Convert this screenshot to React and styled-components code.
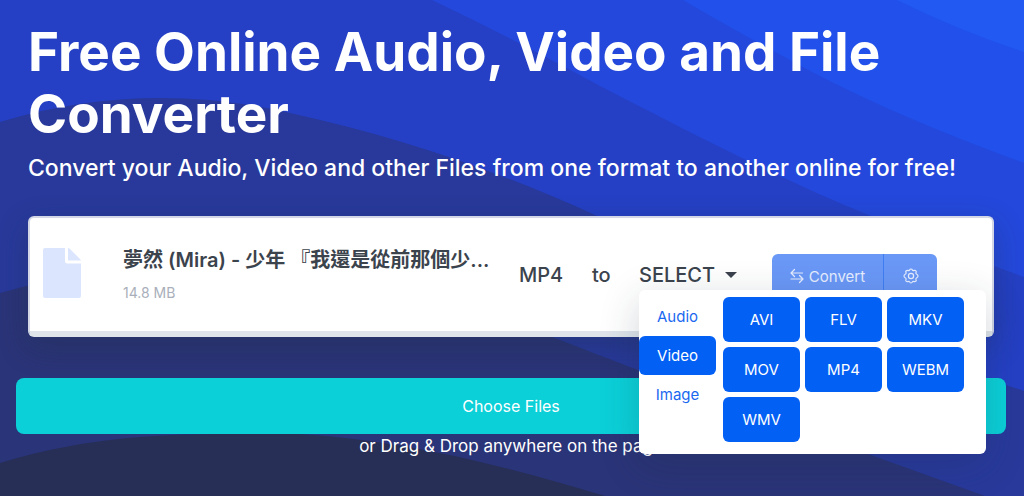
import React, { useState } from "react";
import styled, { createGlobalStyle } from "styled-components";

const formats = {
    Audio: ["AAC", "FLAC", "M4A", "MP3", "OGG", "WAV", "WMA"],
    Video: ["AVI", "FLV", "MKV", "MOV", "MP4", "WEBM", "WMV"],
    Image: ["BMP", "GIF", "JPG", "PNG", "TIFF", "WEBP"],
};

const Waves = () => (
    <WavesSvg viewBox="0 0 1024 496" preserveAspectRatio="none" aria-hidden="true">
        <rect width="1024" height="496" fill="#2259f3" />
        <path fill="#2150ea" d="M0 0H897Q960 31 1024 52V496H0Z" />
        <path fill="#2448db" d="M0 0H683Q732 29 812 72Q900 118 1024 163V496H0Z" />
        <path fill="#2540c4" d="M0 0H432Q512 38 600 86C700 138 800 188 869 215Q940 247 1024 277V496H0Z" />
        <path fill="#28399b" d="M0 122C100 91 200 92 290 113C390 135 490 167 595 215C740 282 860 337 1024 391V496H0Z" />
        <path fill="#2a3478" d="M0 293C110 262 210 262 310 276C400 289 480 310 552 337C680 386 770 421 868 454L985 496H0Z" />
        <path fill="#272f56" d="M0 463C110 430 200 434 300 434C400 440 500 464 605 496H0Z" />
    </WavesSvg>
);

const FileIcon = () => (
    <svg width="38" height="50" viewBox="0 0 38 50" fill="#dbe6fe" aria-hidden="true">
        <path d="M2 0H22V13Q22 15.500 24.500 15.500H38V48Q38 50 36 50H2Q0 50 0 48V2Q0 0 2 0Z" />
        <path d="M25 0Q26 0 27 1L37 11Q38 12 38 12.500H25Z" />
    </svg>
);

const SwapIcon = () => (
    <svg width="14" height="16" viewBox="0 0 14 16" fill="none" stroke="currentColor" strokeWidth="1.2" strokeLinecap="round" strokeLinejoin="round" aria-hidden="true">
        <path d="M4.500 1.500L1 5L4.500 8.500M1 5H12.500M1 11H13M9.500 7.500L13 11L9.500 14.500" />
    </svg>
);

// Outline with eight rounded teeth
const GearIcon = () => (
    <svg width="16" height="16" viewBox="0 0 16 16" fill="none" stroke="currentColor" strokeWidth="1.2" strokeLinejoin="round" aria-hidden="true">
        <path d="M6.600 2.100Q7 1 8 1T9.400 2.100Q10 3 11.100 2.400Q12.300 2 13 3T12.900 4.600Q12.700 5.800 13.800 6.300Q15 6.900 15 8T13.800 9.700Q12.700 10.200 12.900 11.400Q13.700 12.300 13 13T11.100 13.600Q10 13 9.400 13.900Q9 15 8 15T6.600 13.900Q6 13 4.900 13.600Q3.700 14 3 13T3.100 11.400Q3.300 10.200 2.200 9.700Q1 9.100 1 8T2.200 6.300Q3.300 5.800 3.100 4.600Q2.300 3.700 3 3T4.900 2.400Q6 3 6.600 2.100Z" />
        <circle cx="8" cy="8" r="2.600" />
    </svg>
);

const FormatMenu = () => {
    const [tab, setTab] = useState("Video");
    return (
        <Menu>
            <Tabs>
                {Object.keys(formats).map((name) => (
                    <Tab key={name} $active={name === tab} onClick={() => setTab(name)}>
                        {name}
                    </Tab>
                ))}
            </Tabs>
            <Formats>
                {formats[tab].map((name) => (
                    <Format key={name}>{name}</Format>
                ))}
            </Formats>
        </Menu>
    );
};

const App = () => {
    const [open, setOpen] = useState(true);
    return (
        <>
            <GlobalStyle />
            <Hero>
                <Waves />
                <Intro>
                    <h1>Free Online Audio, Video and File Converter</h1>
                    <p>Convert your Audio, Video and other Files from one format to another online for free!</p>
                </Intro>
                <FileCard>
                    <FileIcon />
                    <FileInfo>
                        <FileName>夢然 (Mira) - 少年 『我還是從前那個少...</FileName>
                        <FileSize>14.8 MB</FileSize>
                    </FileInfo>
                    <Source>MP4</Source>
                    <To>to</To>
                    <Target>
                        <Select aria-haspopup="true" aria-expanded={open} onClick={() => setOpen(!open)}>
                            SELECT
                            <Caret />
                        </Select>
                        {open && <FormatMenu />}
                    </Target>
                    <Actions>
                        <Convert>
                            <SwapIcon />
                            Convert
                        </Convert>
                        <Settings aria-label="Settings">
                            <GearIcon />
                        </Settings>
                    </Actions>
                </FileCard>
                <Choose>Choose Files</Choose>
                <Hint>or Drag &amp; Drop anywhere on the page</Hint>
            </Hero>
        </>
    );
};

const GlobalStyle = createGlobalStyle`
    * {
        box-sizing: border-box;
        margin: 0;
        padding: 0;
    }
    body {
        font-family: Inter, "Noto Sans CJK TC", sans-serif;
        background: #272f56;
    }
    button {
        border: none;
        font-family: inherit;
        cursor: pointer;
    }
`;

const Hero = styled.main`
    position: relative;
    isolation: isolate;
    min-height: 100vh;
    padding: 21px 18px 0 16px;
    color: white;
`;

const WavesSvg = styled.svg`
    position: absolute;
    inset: 0;
    z-index: -1;
    width: 100%;
    height: 100%;
`;

const Intro = styled.header`
    padding: 0 12px;
    h1 {
        font-size: 53px;
        line-height: 62px;
        font-weight: 700;
    }
    p {
        padding-top: 8px;
        font-size: 23px;
        line-height: 30px;
        font-weight: 500;
    }
`;

const FileCard = styled.section`
    display: flex;
    align-items: center;
    margin: 33px 12px 0;
    min-height: 121px;
    padding: 0 55px 0 13px;
    border: 2px solid #d3d7e6;
    border-bottom: 6px solid #dee4ea;
    border-radius: 6px;
    background: white;
    color: #3b434d;
    box-shadow: 0 10px 30px rgba(31, 45, 61, 0.3);
    > svg {
        flex: none;
        margin-bottom: 4px;
    }
`;

const FileInfo = styled.div`
    flex: 1;
    min-width: 0;
    margin: 0 24px 0 42px;
`;

const FileName = styled.h2`
    overflow: hidden;
    white-space: nowrap;
    text-overflow: ellipsis;
    font-size: 20px;
    line-height: 30px;
    font-weight: 600;
`;

const FileSize = styled.p`
    margin-top: 6px;
    font-size: 14px;
    line-height: 24px;
    color: #a9afba;
`;

const Source = styled.span`
    width: 73px;
    font-size: 20px;
    font-weight: 500;
`;

const To = styled.span`
    width: 47px;
    font-size: 20px;
    font-weight: 500;
`;

const Target = styled.div`
    position: relative;
    width: 133px;
`;

const Select = styled.button`
    display: flex;
    align-items: center;
    gap: 10px;
    background: none;
    color: inherit;
    font-size: 20px;
    line-height: 30px;
    font-weight: 500;
`;

const Caret = styled.span`
    border: 6px solid transparent;
    border-top-color: currentColor;
    border-bottom: none;
`;

const Menu = styled.div`
    position: absolute;
    top: 100%;
    left: 0;
    z-index: 1;
    display: flex;
    gap: 7px;
    width: 347px;
    padding: 7px 0 12px;
    border-radius: 6px;
    background: white;
    box-shadow: 0 10px 40px rgba(31, 45, 61, 0.2);
`;

const Tabs = styled.div`
    display: flex;
    flex-direction: column;
    width: 77px;
`;

const Tab = styled.button`
    height: 39px;
    border-radius: 6px;
    background: ${(props) => (props.$active ? "#0360f4" : "none")};
    color: ${(props) => (props.$active ? "white" : "#1a68f0")};
    font-size: 15px;
`;

const Formats = styled.div`
    display: grid;
    grid-template-columns: repeat(3, 77px);
    grid-auto-rows: 45px;
    align-content: start;
    gap: 5px;
`;

const Format = styled.button`
    border-radius: 6px;
    background: #0360f4;
    color: white;
    font-size: 15px;
`;

const Actions = styled.div`
    display: flex;
    height: 44px;
    margin-top: 3px;
    color: #e6eefe;
`;

const Convert = styled.button`
    display: flex;
    align-items: center;
    justify-content: center;
    gap: 5px;
    width: 112px;
    border-right: 1px solid #3f7ef2;
    border-radius: 6px 0 0 6px;
    background: #6a98f7;
    color: inherit;
    font-size: 15px;
`;

const Settings = styled(Convert)`
    width: 53px;
    border-right: none;
    border-radius: 0 6px 6px 0;
`;

const Choose = styled.button`
    display: block;
    width: 100%;
    height: 56px;
    margin-top: 41px;
    border-radius: 8px;
    background: #0bd0d8;
    color: white;
    font-size: 16px;
`;

const Hint = styled.p`
    font-size: 17px;
    line-height: 24px;
    text-align: center;
`;

export default App;
